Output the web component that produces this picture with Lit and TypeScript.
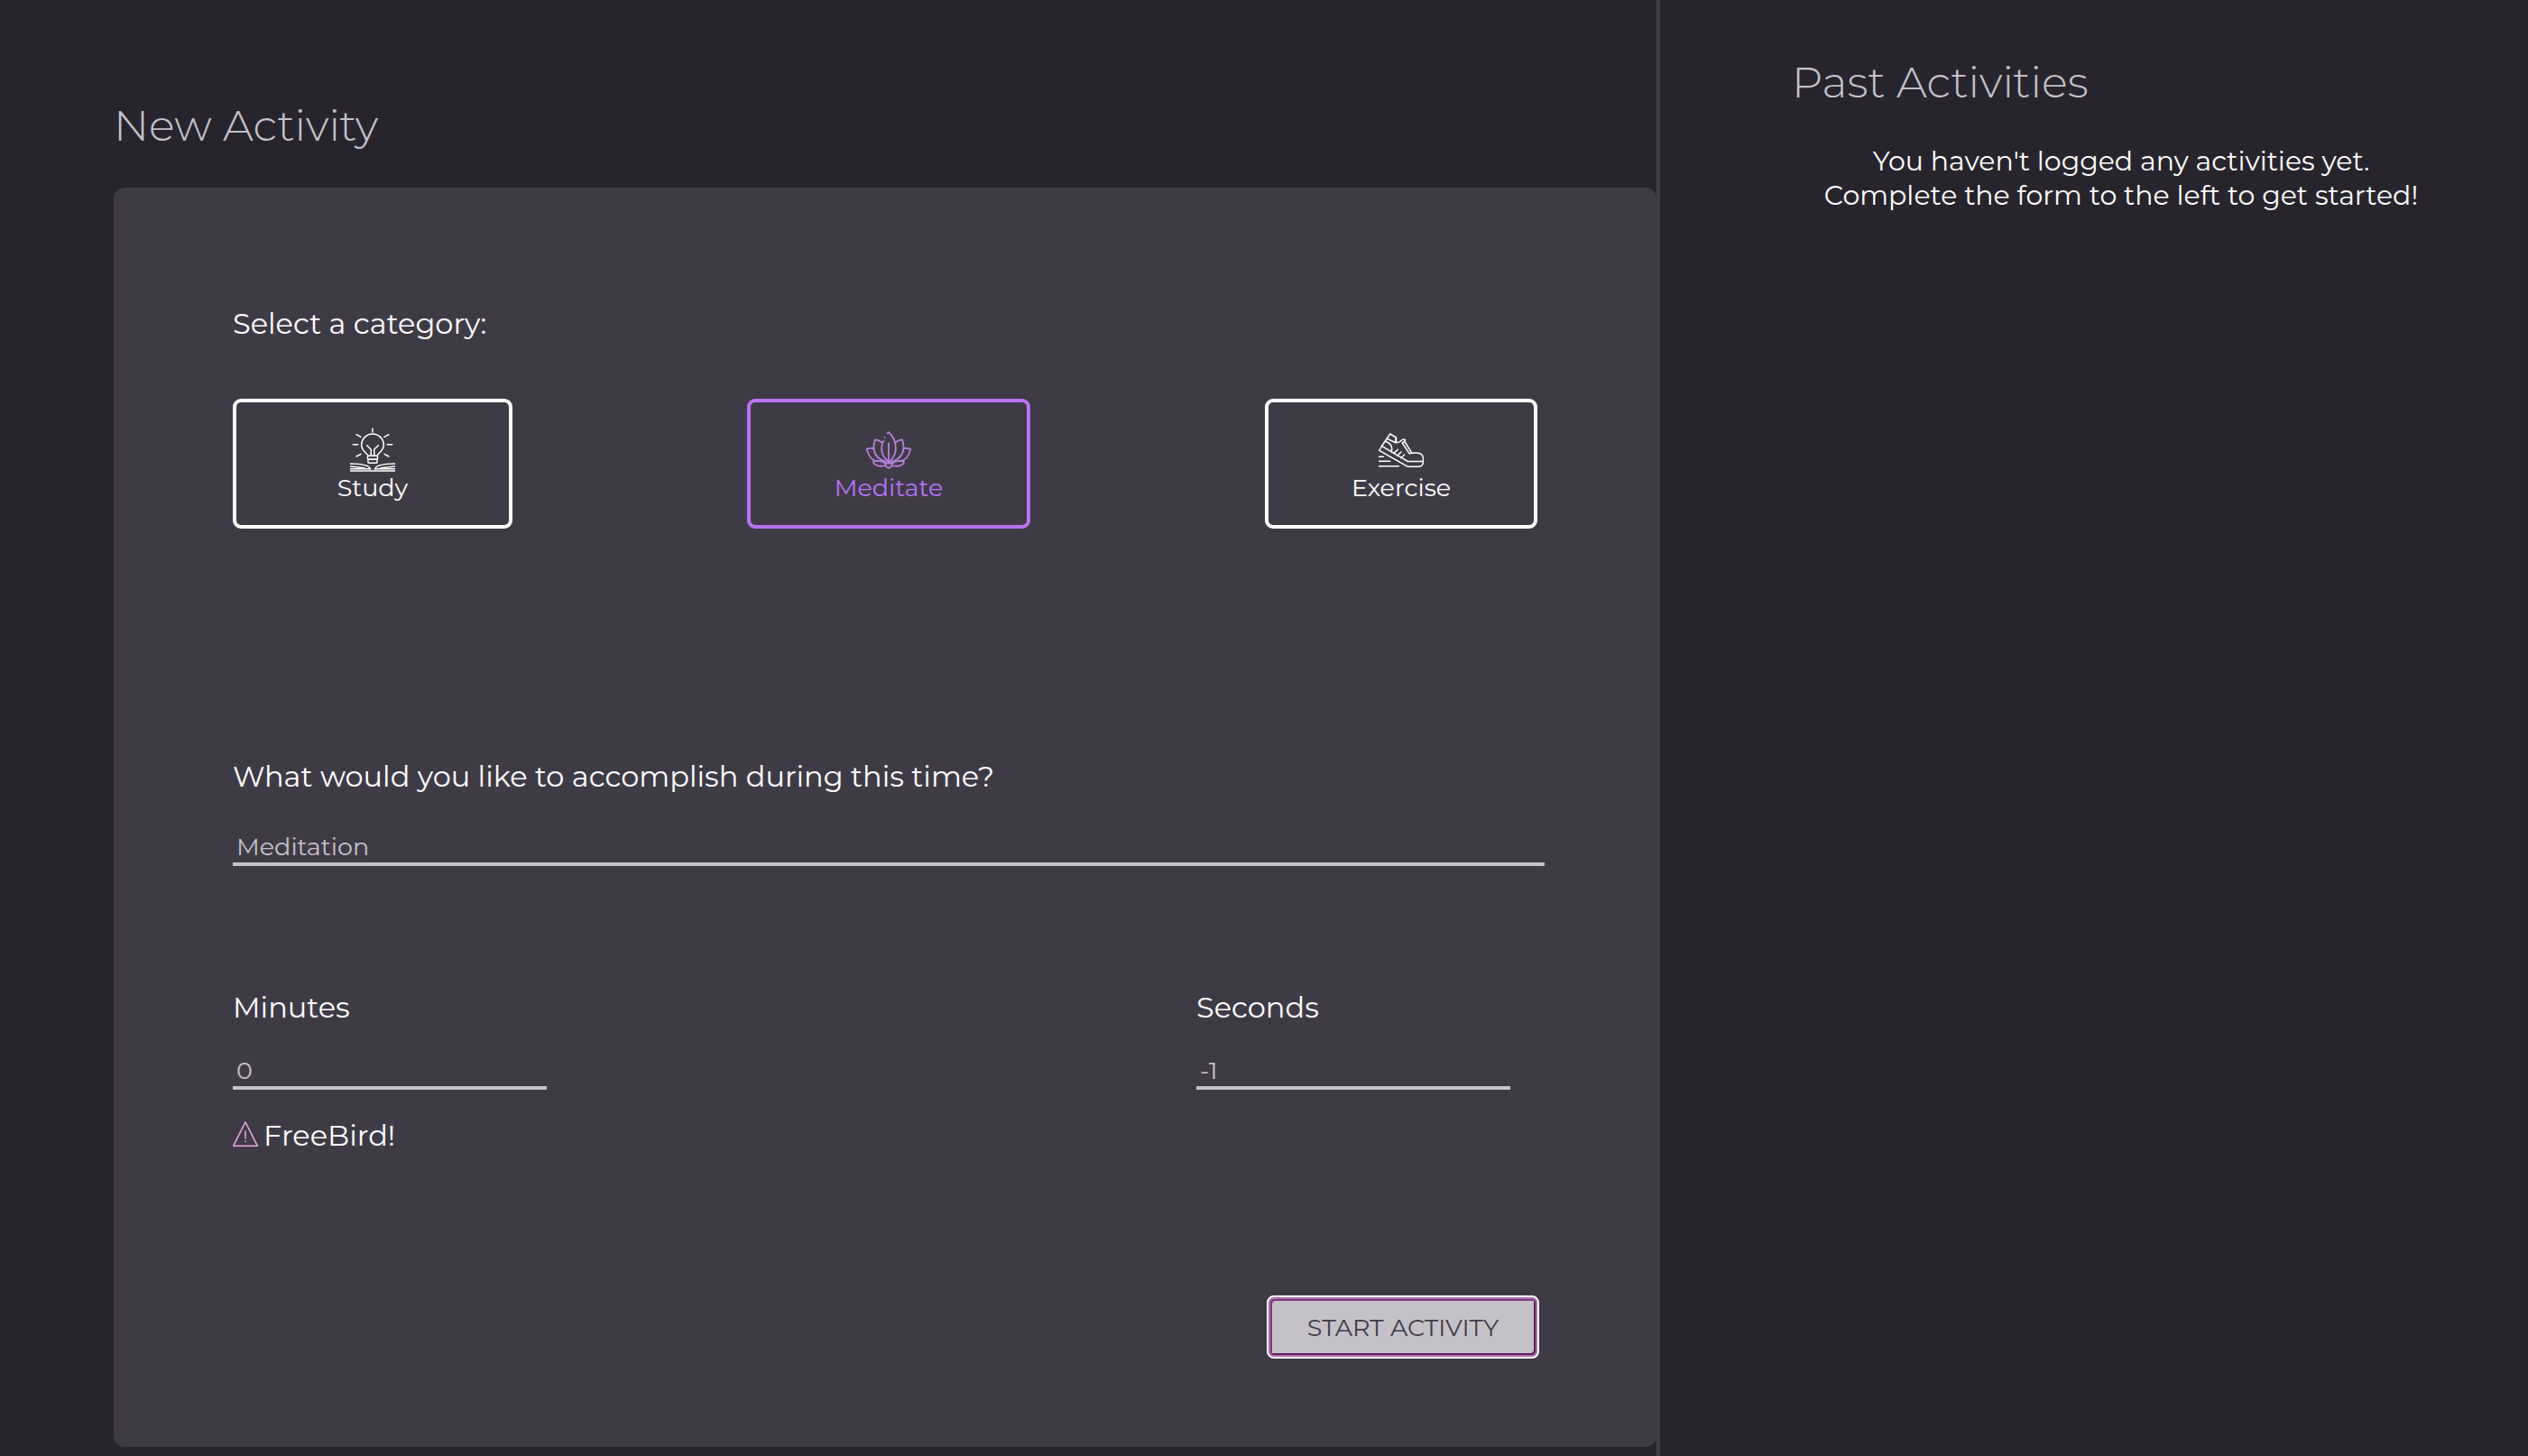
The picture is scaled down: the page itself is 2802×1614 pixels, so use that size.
import { LitElement, html, css, svg } from "lit";
import { customElement, state } from "lit/decorators.js";
import { classMap } from "lit/directives/class-map.js";

const studyIcon = svg`
  <path d="M25 1v4M7 7.7l5 2.7M43 7.7l-5 2.7M3.3 18.7h5.4M46.7 18.7h-5.4M7 32l5-2.7M43 32l-5-2.7" />
  <path d="M20 31.3C20 29 12.7 26.5 12.7 19.3A12.3 12.3 0 0 1 37.3 19.3C37.3 26.5 30 29 30 31.3" />
  <path d="M18.7 19.7l4.6 4.6V31M31.3 19.7l-4.6 4.6V31" />
  <rect x="19.5" y="31.3" width="11" height="4" rx="1" />
  <rect x="20" y="35.3" width="10" height="4" rx="1" />
  <path d="M0 48h50M0 45.7h22.5M50 45.7H27.5" />
  <path d="M0 40C10 40 21 41 22.5 46M50 40C40 40 29 41 27.5 46M0 43l16 1.7M50 43l-16 1.7" />`;

const meditateIcon = svg`
  <path d="M23.6 6.3L25 5.2C31 10 32.8 17 32.8 23C32.8 30 29 35 25.5 38.3C21 35 17.2 30 17.2 23C17.2 21 17.5 19.5 18 17.5" />
  <path d="M25 17.3V38" />
  <path d="M20.7 10.8v.2M19.4 14.5v.8" />
  <path d="M18.3 17C16 15 13 13.5 10 13.4C8.7 17 8.2 20 8.6 24C9.6 31 15 36 22.5 38" />
  <path d="M31.7 17C34 15 37 13.5 40 13.4C41.3 17 41.8 20 41.4 24C40.4 31 35 36 27.5 38" />
  <path d="M8.5 23C6 22.7 3 23 .8 23.6C2 30 6 36 12 37.5" />
  <path d="M41.5 23C44 22.7 47 23 49.2 23.6C48 30 44 36 38 37.5" />
  <path d="M8.3 37.3C7.5 38.5 8.5 40 11 41.5C14.5 43.2 18 43 21.5 42M8.3 37.3C13 36.3 18 37 21.8 40" />
  <path d="M41.7 37.3C42.5 38.5 41.5 40 39 41.5C35.5 43.2 32 43 28.5 42M41.7 37.3C37 36.3 32 37 28.2 40" />
  <path d="M22 39.5H28L29 42.3L25 45L21 42.3Z" />`;

const exerciseIcon = svg`
  <path d="M12.8 7l6.7 4v4.5M19 16.5c3 .5 4.5-.5 6-2c1.5-1.5 3-2 4.5-.7L29 15.5l7.8 12.7C42 27.5 46 28 48 30c1.6 2 1.6 4 1.5 7.5c-.2 3.8-1.5 5.5-4.5 5.7H32L.8 25.3L3.5 20.5" />
  <path d="M3.8 20.7L32.5 37.5H49.5" />
  <path d="M12.8 7L3.5 20.5M9.8 12.5L19 16.7V12M8.3 15.5C14 17.5 15.7 22 14.2 27" />
  <path d="M21.3 24.2l-4.6 4.4M25 27l-4.4 4.3M28.7 30l-4 3.7" />
  <path d="M29 15.5L26.3 17L34 28.7L36.8 28.2" />
  <path d="M0 32.3h5.5M0 37.3h12.7M0 42.7h22.3" />`;

const categories = [
  { name: "Study", icon: studyIcon },
  { name: "Meditate", icon: meditateIcon },
  { name: "Exercise", icon: exerciseIcon },
];

@customElement("app-root")
export class AppRoot extends LitElement {
  @state() private selected = "Meditate";

  static styles = css`
    :host {
      display: grid;
      grid-template-columns: minmax(0, 1840fr) minmax(0, 962fr);
      min-height: 100vh;
      box-sizing: border-box;
      background: #27242d;
      color: #fff;
      font: 400 32px/39px Montserrat, Inter, sans-serif;
    }
    * {
      box-sizing: border-box;
    }
    h2,
    p,
    fieldset {
      margin: 0;
      padding: 0;
      border: 0;
      min-width: 0;
    }
    h2 {
      color: #c5c1c9;
      font-size: 48px;
      line-height: 58px;
      font-weight: 350;
    }
    .new {
      padding: 110px 0 10px 126px;
      border-right: 4px solid #3f3b46;
    }
    .past {
      padding: 62px 86px 0 146px;
    }
    .empty {
      margin-top: 40px;
      font-size: 30px;
      line-height: 38px;
      text-align: center;
    }
    .card {
      margin-top: 40px;
      padding: 131px 124px 100px 132px;
      border-radius: 12px;
      background: #3f3b46;
    }
    .card legend,
    .card label {
      display: block;
      padding: 0;
    }
    .categories {
      display: grid;
      grid-template-columns: 310fr 314fr 302fr;
      gap: 18%;
      margin: 64px 8px 0 0;
    }
    .category {
      display: flex;
      flex-direction: column;
      align-items: center;
      padding: 28px 0 25px;
      border: 4px solid #fff;
      border-radius: 9px;
      background: none;
      color: #fff;
      font: 400 27px/33px Montserrat, Inter, sans-serif;
    }
    .category.selected {
      border-color: #b972f8;
      color: #b972f8;
    }
    .icon {
      width: 50px;
      height: 50px;
      fill: none;
      stroke: #fff;
      stroke-width: 1.5;
      stroke-linecap: round;
      stroke-linejoin: round;
    }
    .selected .icon {
      stroke: #b681dd;
      stroke-width: 1.8;
    }
    input {
      display: block;
      width: 100%;
      height: 39px;
      margin: 0;
      padding: 1px 4px;
      border: 0;
      border-bottom: 4px solid #c5c1c9;
      border-radius: 0;
      outline: 0;
      background: none;
      color: #c5c1c9;
      font: 400 27px/33px Montserrat, Inter, sans-serif;
      appearance: textfield;
    }
    .goal {
      display: grid;
      gap: 41px;
      margin-top: 255px;
    }
    .times {
      display: flex;
      justify-content: space-between;
      margin: 137px 38px 0 0;
    }
    .time {
      display: grid;
      gap: 33px;
      flex: 0 0 348px;
    }
    .warning {
      display: flex;
      align-items: center;
      gap: 6px;
      margin-top: 31px;
    }
    .alert {
      width: 28px;
      height: 28px;
      margin-bottom: 4px;
      fill: none;
      stroke: #e9a6e4;
      stroke-width: 1.5;
      stroke-linejoin: round;
    }
    .start {
      display: block;
      width: 298px;
      height: 66px;
      margin: 160px 8px 0 auto;
      padding: 0;
      border: 2px solid #b06fae;
      border-radius: 6px;
      outline: 2px solid #fff;
      background: #c5c1c9;
      box-shadow: inset -2px -2px #5c2158, inset 2px 2px #7a3d77;
      color: #3f3b46;
      font: 400 27px/33px Montserrat, Inter, sans-serif;
    }
  `;

  render() {
    return html`
      <section class="new">
        <h2>New Activity</h2>
        <form class="card" @submit=${(e: Event) => e.preventDefault()}>
          <fieldset>
            <legend>Select a category:</legend>
            <div class="categories">
              ${categories.map(
                ({ name, icon }) => html`<button
                  type="button"
                  class=${classMap({ category: true, selected: name === this.selected })}
                  aria-pressed=${name === this.selected}
                  @click=${() => (this.selected = name)}
                >
                  <svg class="icon" viewBox="0 0 50 50" aria-hidden="true">${icon}</svg>
                  ${name}
                </button>`
              )}
            </div>
          </fieldset>
          <div class="goal">
            <label for="goal">What would you like to accomplish during this time?</label>
            <input id="goal" type="text" value="Meditation" />
          </div>
          <div class="times">
            <div class="time">
              <label for="minutes">Minutes</label>
              <input id="minutes" type="number" value="0" />
            </div>
            <div class="time">
              <label for="seconds">Seconds</label>
              <input id="seconds" type="number" value="-1" />
            </div>
          </div>
          <p class="warning">
            <svg class="alert" viewBox="0 0 28 28" aria-hidden="true">
              <path d="M14 .8L27.3 27.2H.7ZM14 10.5v9M14 21.5v1.6" />
            </svg>
            FreeBird!
          </p>
          <button class="start" type="submit">START ACTIVITY</button>
        </form>
      </section>
      <aside class="past">
        <h2>Past Activities</h2>
        <p class="empty">
          You haven't logged any activities yet.<br />Complete the form to the left to get started!
        </p>
      </aside>
    `;
  }
}
